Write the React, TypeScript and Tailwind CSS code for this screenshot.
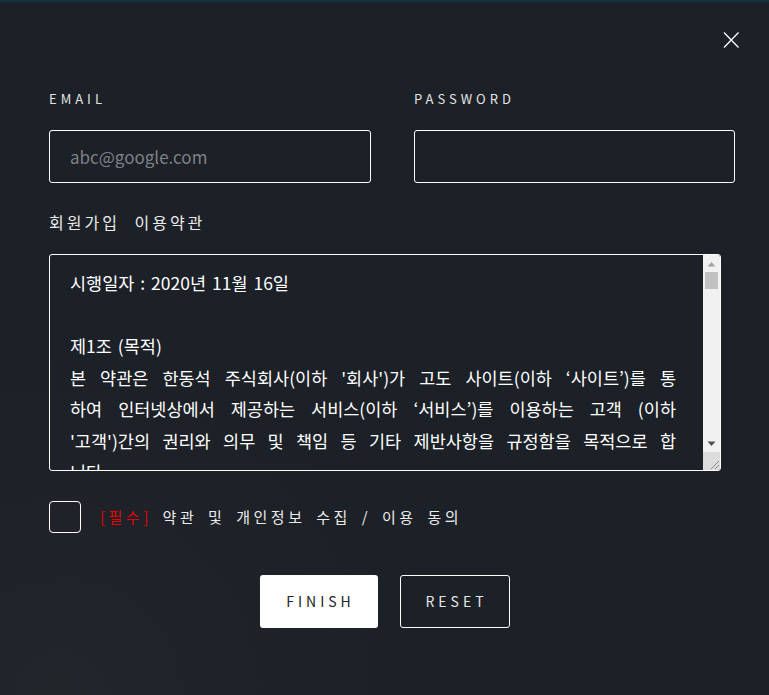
import React from "react";

function FakeScrollbar() {
  return (
    <div className="w-[17px] h-full flex flex-col bg-[#f1f1f1] shrink-0">
      <div className="h-[17px] flex items-center justify-center">
        <svg width="9" height="6" viewBox="0 0 9 6">
          <path d="M0.5 5.5L4.5 1L8.5 5.5Z" fill="#a3a3a3" />
        </svg>
      </div>
      <div className="flex-1 px-[2px]">
        <div className="h-[17px] bg-[#c1c1c1]" />
      </div>
      <div className="h-[17px] flex items-center justify-center">
        <svg width="9" height="6" viewBox="0 0 9 6">
          <path d="M0.5 0.5L4.5 5L8.5 0.5Z" fill="#505050" />
        </svg>
      </div>
      <div className="h-[18px] bg-[#dcdcdc] flex items-end justify-end">
        <svg width="12" height="12" viewBox="0 0 12 12" stroke="#8a8a8a" strokeWidth="1">
          <path d="M11 3L3 11M11 7L7 11" />
        </svg>
      </div>
    </div>
  );
}

export default function App() {
  const font = { fontFamily: '"Noto Sans CJK KR", "Noto Sans", sans-serif' };
  const jl = "block whitespace-nowrap [text-align-last:justify]";
  return (
    <div
      className="relative w-[769px] h-[695px] overflow-hidden bg-[#1c2027] bg-[radial-gradient(ellipse_at_8%_100%,#22262b_0%,#1c2027_35%)] text-white"
      style={font}
    >
      <div className="h-[2px] bg-[#173040]" />
      <button className="absolute left-[722px] top-[31px] w-[18px] h-[18px]" aria-label="close">
        <svg width="18" height="18" viewBox="0 0 18 18" fill="none" stroke="#fff" strokeWidth="1.3">
          <path d="M2 1.5L16.5 16.5M16.5 1.5L2 16.5" />
        </svg>
      </button>
      <div className="pl-[49px] pr-[34px] pt-[88px]">
        <div className="grid grid-cols-[322px_321px] gap-x-[43px]">
          <div>
            <div className="text-[13px] leading-[18px] tracking-[4px] text-[#e4e4e4]">EMAIL</div>
            <input
              placeholder="abc@google.com"
              className="mt-[22px] w-full h-[53px] rounded-[3px] border border-white bg-transparent px-[20px] text-[17px] text-white placeholder:text-[#7f8186] outline-none"
            />
          </div>
          <div>
            <div className="text-[13px] leading-[18px] tracking-[4px] text-[#e4e4e4]">PASSWORD</div>
            <input
              type="password"
              className="mt-[22px] w-full h-[53px] rounded-[3px] border border-white bg-transparent px-[20px] text-[17px] text-white outline-none"
            />
          </div>
        </div>
        <div className="mt-[28px] text-[16px] leading-[22px] tracking-[3px] [word-spacing:8px] text-[#ececec]">
          회원가입 이용약관
        </div>
        <div className="mt-[21px] flex w-[672px] h-[217px] rounded-[3px] border border-white overflow-hidden">
          <div className="flex-1 h-full overflow-hidden pl-[20px] pr-[27px] pt-[12px] text-[17.5px] leading-[31.5px] [word-spacing:2px] text-white">
            <p>시행일자 : 2020년 11월 16일</p>
            <p>&nbsp;</p>
            <p>제1조 (목적)</p>
            <p>
              <span className={jl}>본 약관은 한동석 주식회사(이하 '회사')가 고도 사이트(이하 ‘사이트’)를 통</span>
              <span className={jl}>하여 인터넷상에서 제공하는 서비스(이하 ‘서비스’)를 이용하는 고객 (이하</span>
              <span className={jl}>'고객')간의 권리와 의무 및 책임 등 기타 제반사항을 규정함을 목적으로 합</span>
              <span className="block">니다.</span>
            </p>
          </div>
          <FakeScrollbar />
        </div>
        <div className="mt-[30px] flex items-center">
          <div className="w-[32px] h-[32px] rounded-[4px] border border-white" />
          <div className="ml-[19px] text-[15px] leading-[22px] tracking-[3.5px] [word-spacing:4px] text-[#ececec]">
            <span className="text-[#e60000]">[필수]</span> 약관 및 개인정보 수집 / 이용 동의
          </div>
        </div>
      </div>
      <div className="mt-[42px] flex justify-center gap-[22px]">
        <button className="w-[118px] h-[53px] rounded-[3px] bg-white text-[14px] tracking-[4px] pl-[4px] text-[#222]">FINISH</button>
        <button className="w-[110px] h-[53px] rounded-[3px] border border-white bg-transparent text-[14px] tracking-[4px] pl-[4px] text-[#e6e6e6]">RESET</button>
      </div>
    </div>
  );
}
